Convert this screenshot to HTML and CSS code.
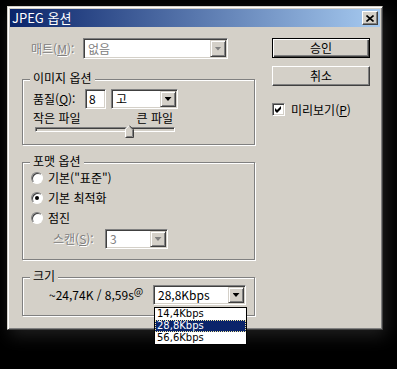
FILE: index.html
```html
<!DOCTYPE html>
<html lang="ko">
<head>
  <meta charset="UTF-8">
  <title>JPEG 옵션</title>
  <link rel="stylesheet" href="styles.css">
</head>
<body>
  <div class="window">
    <div class="titlebar">
      <span class="title">JPEG 옵션</span>
      <span class="close">
        <svg width="8" height="7" viewBox="0 0 8 7"><path d="M0.5 0.5 L7.5 6.5 M7.5 0.5 L0.5 6.5" stroke="#000" stroke-width="1.6" fill="none"/></svg>
      </span>
    </div>

    <div class="content">
      <div class="left">
        <div class="matRow">
          <span class="label matLabel disabled">매트(<u>M</u>):</span>
          <div class="combo matCombo isDisabled">
            <span class="comboText">없음</span>
            <span class="arrow"><i></i></span>
          </div>
        </div>

        <div class="group imageGroup">
          <span class="legend">이미지 옵션</span>
          <div class="qualityRow">
            <span class="label qLabel">품질(<u>Q</u>):</span>
            <div class="edit qEdit">8</div>
            <div class="combo qCombo">
              <span class="comboText">고</span>
              <span class="arrow"><i></i></span>
            </div>
          </div>
          <div class="sizeLabels"><span>작은 파일</span><span>큰 파일</span></div>
          <div class="slider">
            <div class="track"></div>
            <svg class="thumb" width="9" height="13" viewBox="0 0 9 13">
              <path d="M0 13 V4 L4 0 L8 4 V13 Z" fill="#d4d0c8"/>
              <path d="M0.5 12.5 V4.2 L4.2 0.5" stroke="#fff" fill="none"/>
              <path d="M4.5 0.8 L8.5 4.5 V12.5 H0.5" stroke="#404040" fill="none"/>
              <path d="M4.6 1.8 L7.5 4.7 V11.5 H1.5" stroke="#808080" fill="none"/>
            </svg>
          </div>
        </div>

        <div class="group formatGroup">
          <span class="legend">포맷 옵션</span>
          <div class="radioRow"><span class="radio"></span><span>기본("표준")</span></div>
          <div class="radioRow"><span class="radio checked"></span><span>기본 최적화</span></div>
          <div class="radioRow"><span class="radio"></span><span>점진</span></div>
          <div class="scanRow">
            <span class="label scanLabel disabled">스캔(<u>S</u>):</span>
            <div class="combo scanCombo isDisabled">
              <span class="comboText">3</span>
              <span class="arrow"><i></i></span>
            </div>
          </div>
        </div>

        <div class="group sizeGroup">
          <span class="legend">크기</span>
          <div class="sizeRow">
            <span class="sizeText">~24,74K / 8,59s<sup>@</sup></span>
            <div class="combo speedCombo">
              <span class="comboText">28,8Kbps</span>
              <span class="arrow"><i></i></span>
              <ul class="dropList">
                <li>14,4Kbps</li>
                <li class="selected">28,8Kbps</li>
                <li>56,6Kbps</li>
              </ul>
            </div>
          </div>
        </div>
      </div>

      <div class="right">
        <div class="button default">승인</div>
        <div class="button">취소</div>
        <div class="checkRow">
          <span class="checkbox">
            <svg width="7" height="7" viewBox="0 0 7 7"><path d="M0 2 L2 4 L6 0 V3 L2 7 L0 5 Z" fill="#000"/></svg>
          </span>
          <span>미리보기(<u>P</u>)</span>
        </div>
      </div>
    </div>
  </div>
</body>
</html>
```

FILE: styles.css
```css
* {
  box-sizing: border-box;
}

body {
  margin: 0;
  min-height: 369px;
  padding-top: 6px;
  background: #000;
  color: #000;
  font-family: "Noto Sans CJK KR", "Liberation Sans", sans-serif;
  font-size: 12px;
  line-height: 14px;
}

u {
  text-decoration: underline;
  text-underline-offset: 1px;
}

/* window frame */
.window {
  margin: 0 0 0 7px;
  width: 376px;
  height: 324px;
  padding: 2px;
  background: #d4d0c8;
  border: 1px solid;
  border-color: #d4d0c8 #404040 #404040 #d4d0c8;
  box-shadow: inset 1px 1px #fff, inset -1px -1px #808080, 3px 6px 16px rgba(90, 90, 90, 0.35);
}

.titlebar {
  height: 18px;
  display: flex;
  align-items: center;
  justify-content: space-between;
  padding: 0 2px 0 2px;
  background: linear-gradient(to right, #0a246a, #a6caf0);
  color: #fff;
}

.title {
  font-size: 13px;
  line-height: 18px;
}

.close {
  width: 16px;
  height: 14px;
  display: flex;
  align-items: center;
  justify-content: center;
  background: #d4d0c8;
  border: 1px solid;
  border-color: #fff #404040 #404040 #fff;
  box-shadow: inset -1px -1px #808080;
}

.content {
  display: flex;
  padding: 11px 0 0 12px;
}

.left {
  width: 233px;
}

.right {
  width: 98px;
  margin-left: 17px;
  display: flex;
  flex-direction: column;
}

.disabled {
  color: #808080;
  text-shadow: 1px 1px #fff;
}

/* combo + edit */
.combo,
.edit {
  position: relative;
  display: flex;
  background: #fff;
  border: 1px solid;
  border-color: #808080 #fff #fff #808080;
  box-shadow: inset 1px 1px #404040, inset -1px -1px #d4d0c8;
  padding: 1px;
}

.edit {
  padding: 2px 3px;
  line-height: 14px;
}

.comboText {
  flex: 1;
  padding-left: 3px;
  display: flex;
  align-items: center;
}

.arrow {
  width: 16px;
  display: flex;
  align-items: center;
  justify-content: center;
  background: #d4d0c8;
  border: 1px solid;
  border-color: #d4d0c8 #404040 #404040 #d4d0c8;
  box-shadow: inset 1px 1px #fff, inset -1px -1px #808080;
}

.arrow i {
  width: 7px;
  height: 4px;
  background: #000;
  clip-path: polygon(0 0, 100% 0, 50% 100%);
}

.isDisabled .comboText {
  color: #808080;
}

.isDisabled .arrow i {
  background: #808080;
}

.matRow {
  display: flex;
  align-items: center;
  height: 21px;
}

.matLabel {
  width: 61px;
  padding-left: 9px;
}

.matCombo {
  width: 145px;
  height: 21px;
}

/* group boxes */
.group {
  position: relative;
  border: 1px solid #808080;
  box-shadow: 1px 1px #fff, inset 1px 1px #fff;
}

.legend {
  position: absolute;
  top: -9px;
  left: 7px;
  padding: 0 3px;
  background: #d4d0c8;
}

.imageGroup {
  margin-top: 20px;
  height: 66px;
  padding: 9px 0 0 10px;
}

.qualityRow {
  display: flex;
  align-items: center;
  height: 20px;
}

.qLabel {
  width: 52px;
}

.qEdit {
  width: 21px;
  height: 20px;
}

.qCombo {
  width: 67px;
  height: 20px;
  margin-left: 5px;
}

.sizeLabels {
  display: flex;
  justify-content: space-between;
  width: 142px;
  height: 13px;
  line-height: 13px;
  margin-top: 2px;
  padding-right: 2px;
}

.slider {
  position: relative;
  width: 140px;
  height: 14px;
  margin-left: 2px;
  padding-top: 3px;
}

.track {
  height: 5px;
  background: #d4d0c8;
  border: 1px solid;
  border-color: #808080 #fff #fff #808080;
  box-shadow: inset 1px 1px #404040;
}

.thumb {
  position: absolute;
  left: 90px;
  top: 1px;
}

.formatGroup {
  margin-top: 17px;
  height: 98px;
  padding: 5px 0 0 8px;
}

.radioRow {
  display: flex;
  align-items: center;
  gap: 5px;
  height: 20px;
}

.radio {
  position: relative;
  width: 12px;
  height: 12px;
  border-radius: 50%;
  background: #fff;
  border: 1px solid;
  border-color: #808080 #fff #fff #808080;
  box-shadow: inset 1px 1px #404040;
}

.radio.checked::after {
  content: "";
  position: absolute;
  left: 3px;
  top: 3px;
  width: 4px;
  height: 4px;
  border-radius: 50%;
  background: #000;
}

.scanRow {
  display: flex;
  align-items: center;
  height: 20px;
  margin-top: 1px;
  padding-left: 22px;
}

.scanLabel {
  width: 52px;
}

.scanCombo {
  width: 63px;
  height: 20px;
}

.sizeGroup {
  margin-top: 17px;
  height: 39px;
  padding: 7px 0 0 26px;
}

.sizeRow {
  display: flex;
  align-items: center;
  height: 20px;
}

.sizeText {
  width: 104px;
}

.sizeText sup {
  font-size: 10px;
  line-height: 0;
}

.speedCombo {
  width: 93px;
  height: 20px;
}

.dropList {
  position: absolute;
  z-index: 5;
  left: 0;
  top: 21px;
  width: 93px;
  height: 38px;
  margin: 0;
  padding: 0;
  list-style: none;
  background: #fff;
  border: 1px solid #000;
  font-family: "DejaVu Sans", sans-serif;
  font-size: 10px;
}

.dropList li {
  height: 12px;
  line-height: 12px;
  padding-left: 2px;
}

.dropList li.selected {
  background: #0a246a;
  color: #fff;
  outline: 1px dotted #f0e6a0;
  outline-offset: -1px;
}

/* buttons */
.button {
  height: 20px;
  display: flex;
  align-items: center;
  justify-content: center;
  background: #d4d0c8;
  border: 1px solid;
  border-color: #fff #404040 #404040 #fff;
  box-shadow: inset -1px -1px #808080;
}

.button + .button {
  margin-top: 8px;
}

.button.default {
  border: 1px solid #000;
  box-shadow: inset 1px 1px #fff, inset -1px -1px #404040, inset -2px -2px #808080;
}

.checkRow {
  display: flex;
  align-items: center;
  gap: 6px;
  height: 13px;
  margin-top: 17px;
}

.checkbox {
  width: 13px;
  height: 13px;
  display: flex;
  align-items: center;
  justify-content: center;
  background: #fff;
  border: 1px solid;
  border-color: #808080 #fff #fff #808080;
  box-shadow: inset 1px 1px #404040, inset -1px -1px #d4d0c8;
}
```
